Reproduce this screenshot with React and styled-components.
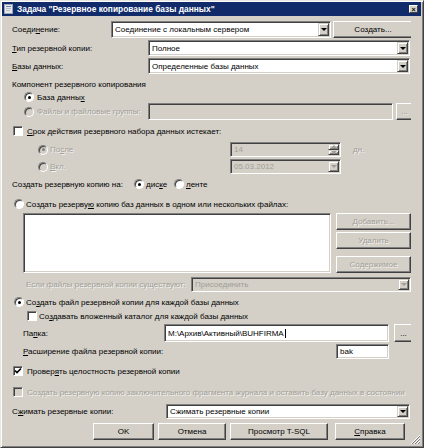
import React from "react";
import styled, { createGlobalStyle } from "styled-components";

const GlobalStyle = createGlobalStyle`
  html, body {
    margin: 0;
    padding: 0;
    background: #d4d0c8;
  }
  body {
    font-family: "Liberation Sans", Arial, sans-serif;
    font-size: 8px;
    color: #000;
  }
`;

const Window = styled.div`
  position: relative;
  width: 424px;
  height: 448px;
  box-sizing: border-box;
  background: #d4d0c8;
  border: 1px solid;
  border-color: #e8e6e0 #404040 #404040 #e8e6e0;
  box-shadow: inset 1px 1px #fff, inset -1px -1px #808080;
  padding: 1px 2px 2px 1px;
  display: flex;
  flex-direction: column;
  overflow: hidden;
`;

const TitleBar = styled.div`
  height: 14px;
  flex: none;
  display: flex;
  align-items: center;
  padding: 0 3px 0 2px;
  background: #112b6a;
  color: #fff;
  font-weight: bold;
  font-size: 8.4px;
`;

const TitleText = styled.span`
  flex: 1;
  margin-left: 4px;
  white-space: nowrap;
`;

const CloseBtn = styled.span`
  width: 9px;
  height: 8px;
  box-sizing: border-box;
  background: #d4d0c8;
  border: 1px solid;
  border-color: #fff #404040 #404040 #fff;
  display: flex;
  align-items: center;
  justify-content: center;
  color: #000;
  font-size: 7px;
  line-height: 1;
`;

const Content = styled.div`
  padding: 0 10px 0 10px;
  display: flex;
  flex-direction: column;
`;

const Row = styled.div`
  display: flex;
  align-items: center;
  flex: none;
  height: ${(p) => p.$h || 12}px;
  margin-top: ${(p) => p.$mt || 0}px;
  padding-left: ${(p) => p.$indent || 0}px;
  white-space: nowrap;
  overflow: hidden;
`;

const Label = styled.span`
  flex: none;
  width: ${(p) => (p.$w ? `${p.$w}px` : "auto")};
  color: ${(p) => (p.$disabled ? "#a19e97" : "#000")};
  text-shadow: ${(p) => (p.$disabled ? "1px 1px 0 #f4f3f0" : "none")};
  white-space: nowrap;
`;

const U = styled.span`
  text-decoration: underline;
`;

const Field = styled.div`
  flex: none;
  box-sizing: border-box;
  width: ${(p) => p.$w}px;
  height: 100%;
  background: ${(p) => (p.$disabled ? "#d4d0c8" : "#fff")};
  border: 1px solid;
  border-color: #808080 #fff #fff #808080;
  box-shadow: inset 1px 1px #404040, inset -1px -1px #d4d0c8;
  display: flex;
  align-items: stretch;
  padding: 1px;
  color: ${(p) => (p.$disabled ? "#a19e97" : "#000")};
`;

const FieldText = styled.span`
  flex: 1;
  display: flex;
  align-items: center;
  padding-left: 2px;
  overflow: hidden;
  white-space: nowrap;
`;

const Caret = styled.span`
  display: inline-block;
  width: 1px;
  height: 9px;
  background: #000;
  margin-left: 1px;
`;

const ArrowBox = styled.span`
  flex: none;
  width: 11px;
  box-sizing: border-box;
  background: #d4d0c8;
  border: 1px solid;
  border-color: #d4d0c8 #404040 #404040 #d4d0c8;
  box-shadow: inset 1px 1px #fff, inset -1px -1px #808080;
  display: flex;
  align-items: center;
  justify-content: center;
`;

const Tri = styled.span`
  width: 0;
  height: 0;
  border-left: 3px solid transparent;
  border-right: 3px solid transparent;
  ${(p) =>
    p.$up
      ? `border-bottom: 3px solid ${p.$disabled ? "#a19e97" : "#000"};`
      : `border-top: 3px solid ${p.$disabled ? "#a19e97" : "#000"};`}
`;

const SpinCol = styled.span`
  flex: none;
  width: 11px;
  display: flex;
  flex-direction: column;
`;

const SpinHalf = styled(ArrowBox)`
  flex: 1;
  width: 11px;
`;

const Button = styled.button`
  flex: none;
  box-sizing: border-box;
  width: ${(p) => p.$w}px;
  height: ${(p) => p.$h || 17}px;
  margin: 0 0 0 ${(p) => p.$ml || 0}px;
  padding: 0;
  background: #d4d0c8;
  border: 1px solid;
  border-color: #fff #404040 #404040 #fff;
  box-shadow: inset -1px -1px #808080;
  font-family: "Liberation Sans", Arial, sans-serif;
  font-weight: normal;
  font-size: 8px;
  color: ${(p) => (p.$disabled ? "#a19e97" : "#000")};
  text-shadow: ${(p) => (p.$disabled ? "1px 1px 0 #f4f3f0" : "none")};
  display: flex;
  align-items: center;
  justify-content: center;
`;

const Radio = styled.span`
  flex: none;
  width: 10px;
  height: 10px;
  box-sizing: border-box;
  border-radius: 50%;
  margin-right: ${(p) => p.$mr ?? 3}px;
  background: ${(p) => (p.$disabled ? "#d4d0c8" : "#fff")};
  border: 1px solid;
  border-color: #808080 #fff #fff #808080;
  box-shadow: inset 1px 1px #404040;
  display: flex;
  align-items: center;
  justify-content: center;
  &::after {
    content: "";
    display: ${(p) => (p.$checked ? "block" : "none")};
    width: 3px;
    height: 3px;
    border-radius: 50%;
    background: ${(p) => (p.$disabled ? "#808080" : "#000")};
  }
`;

const Check = styled.span`
  flex: none;
  width: 10px;
  height: 10px;
  box-sizing: border-box;
  margin-right: ${(p) => p.$mr ?? 4}px;
  background: ${(p) => (p.$disabled ? "#d4d0c8" : "#fff")};
  border: 1px solid;
  border-color: #808080 #fff #fff #808080;
  box-shadow: inset 1px 1px #404040;
  display: flex;
  align-items: center;
  justify-content: center;
`;

const ListBlock = styled.div`
  display: flex;
  height: 60px;
  margin-top: 3px;
  padding-left: 11px;
  gap: 5px;
`;

const ListBox = styled.div`
  box-sizing: border-box;
  width: 308px;
  height: 100%;
  background: #fff;
  border: 1px solid;
  border-color: #808080 #fff #fff #808080;
  box-shadow: inset 1px 1px #404040, inset -1px -1px #d4d0c8;
`;

const ButtonCol = styled.div`
  display: flex;
  flex-direction: column;
  gap: 2px;
  & > :last-child {
    margin-top: auto;
  }
`;

const Grip = styled.svg`
  position: absolute;
  right: 2px;
  bottom: 2px;
`;

function Combo({ w, children, disabled }) {
  return (
    <Field $w={w} $disabled={disabled}>
      <FieldText>{children}</FieldText>
      <ArrowBox>
        <Tri $disabled={disabled} />
      </ArrowBox>
    </Field>
  );
}

function Spinner({ w, children }) {
  return (
    <Field $w={w} $disabled>
      <FieldText>{children}</FieldText>
      <SpinCol>
        <SpinHalf>
          <Tri $up $disabled />
        </SpinHalf>
        <SpinHalf>
          <Tri $disabled />
        </SpinHalf>
      </SpinCol>
    </Field>
  );
}

function Tick() {
  return (
    <svg width="8" height="8" viewBox="0 0 8 8">
      <path d="M1 3.5 L3 5.5 L7 1.5" stroke="#000" strokeWidth="1.6" fill="none" />
    </svg>
  );
}

export default function App() {
  return (
    <>
      <GlobalStyle />
      <Window>
        <TitleBar>
          <svg width="9" height="10" viewBox="0 0 9 10">
            <rect x="0.5" y="0.5" width="8" height="9" fill="#e8e8e8" stroke="#9aa4b4" />
            <rect x="2" y="2" width="5" height="1" fill="#6c86b8" />
            <rect x="2" y="4" width="5" height="1" fill="#b4bccc" />
            <rect x="2" y="6" width="4" height="1" fill="#b4bccc" />
          </svg>
          <TitleText>Задача "Резервное копирование базы данных"</TitleText>
          <CloseBtn>×</CloseBtn>
        </TitleBar>
        <Content>
          <Row $h={17} $mt={5}>
            <Label $w={99}>
              Соеди<U>н</U>ение:
            </Label>
            <Combo w={220}>Соединение с локальным сервером</Combo>
            <Button $w={80} $ml={2}>
              Соз<U>д</U>ать...
            </Button>
          </Row>
          <Row $h={16} $mt={2}>
            <Label $w={136}>
              <U>Т</U>ип резервной копии:
            </Label>
            <Combo w={262}>Полное</Combo>
          </Row>
          <Row $h={16} $mt={2}>
            <Label $w={136}>
              <U>Б</U>азы данных:
            </Label>
            <Combo w={262}>Определенные базы данных</Combo>
          </Row>
          <Row $mt={4}>
            <Label>Компонент резервного копирования</Label>
          </Row>
          <Row $mt={1} $indent={12}>
            <Radio $checked />
            <Label>
              База данны<U>х</U>
            </Label>
          </Row>
          <Row $h={17} $indent={12}>
            <Radio $disabled />
            <Label $w={111} $disabled>
              Файлы и файловые группы:
            </Label>
            <Field $w={245} $disabled />
            <Button $w={17} $ml={3} $disabled>
              ...
            </Button>
          </Row>
          <Row $mt={5} $indent={1}>
            <Check />
            <Label>
              <U>С</U>рок действия резервного набора данных истекает:
            </Label>
          </Row>
          <Row $h={15} $mt={5} $indent={26}>
            <Radio $checked $disabled $mr={2} />
            <Label $w={180} $disabled>
              По<U>с</U>ле
            </Label>
            <Spinner w={111}>14</Spinner>
            <Label $disabled style={{ marginLeft: 12 }}>
              дн.
            </Label>
          </Row>
          <Row $h={15} $mt={2} $indent={26}>
            <Radio $disabled $mr={2} />
            <Label $w={180} $disabled>
              <U>В</U>кл.
            </Label>
            <Combo w={111} disabled>
              05.03.2012
            </Combo>
          </Row>
          <Row $mt={4}>
            <Label $w={122}>Создать резервную копию на:</Label>
            <Radio $checked $mr={2} />
            <Label $w={28}>
              дис<U>к</U>е
            </Label>
            <Radio $mr={2} />
            <Label>
              <U>л</U>енте
            </Label>
          </Row>
          <Row $mt={8} $indent={2}>
            <Radio $mr={2} />
            <Label>
              Создать резерву<U>ю</U> копию баз данных в одном или нескольких файлах:
            </Label>
          </Row>
          <ListBlock>
            <ListBox />
            <ButtonCol>
              <Button $w={75} $disabled>
                Добавить...
              </Button>
              <Button $w={75} $disabled>
                Удалить
              </Button>
              <Button $w={75} $disabled>
                Содержимое
              </Button>
            </ButtonCol>
          </ListBlock>
          <Row $h={15} $mt={4} $indent={14}>
            <Label $w={165} $disabled>
              Если файлы резервной копии существуют:
            </Label>
            <Combo w={220} disabled>
              Присоединить
            </Combo>
          </Row>
          <Row $mt={4} $indent={2}>
            <Radio $checked $mr={2} />
            <Label>
              Со<U>з</U>дать файл резервной копии для каждой базы данных
            </Label>
          </Row>
          <Row $mt={2} $indent={15}>
            <Check $mr={2} />
            <Label>
              Со<U>з</U>давать вложенный каталог для каждой базы данных
            </Label>
          </Row>
          <Row $h={18} $mt={2} $indent={11}>
            <Label $w={141}>
              Па<U>п</U>ка:
            </Label>
            <Field $w={225}>
              <FieldText>
                M:\Архив\Активный\BUHFIRMA
                <Caret />
              </FieldText>
            </Field>
            <Button $w={19} $h={18} $ml={5}>
              ...
            </Button>
          </Row>
          <Row $h={15} $mt={2} $indent={11}>
            <Label $w={313}>
              <U>Р</U>асширение файла резервной копии:
            </Label>
            <Field $w={53}>
              <FieldText>bak</FieldText>
            </Field>
          </Row>
          <Row $mt={6} $indent={1}>
            <Check>
              <Tick />
            </Check>
            <Label>
              Провер<U>я</U>ть целостность резервной копии
            </Label>
          </Row>
          <Row $mt={9} $indent={1}>
            <Check $disabled />
            <Label $disabled>
              Создать резервную копию заключительного фрагмента журнала и оставить базу данных в состоянии
            </Label>
          </Row>
          <Row $h={15} $mt={6}>
            <Label $w={154}>
              С<U>ж</U>имать резервные копии:
            </Label>
            <Combo w={244}>Сжимать резервные копии</Combo>
          </Row>
          <Row $h={17} $mt={4} $indent={81}>
            <Button $w={61}>OK</Button>
            <Button $w={68} $ml={4}>
              Отмена
            </Button>
            <Button $w={98} $ml={4}>
              Просмотр T-SQL
            </Button>
            <Button $w={70} $ml={7}>
              <U>С</U>правка
            </Button>
          </Row>
        </Content>
        <Grip width="11" height="11" viewBox="0 0 11 11">
          <path d="M10 1 L1 10 M10 4 L4 10 M10 7 L7 10" stroke="#fff" strokeWidth="1" />
          <path d="M10 2 L2 10 M10 5 L5 10 M10 8 L8 10" stroke="#808080" strokeWidth="1" />
        </Grip>
      </Window>
    </>
  );
}
